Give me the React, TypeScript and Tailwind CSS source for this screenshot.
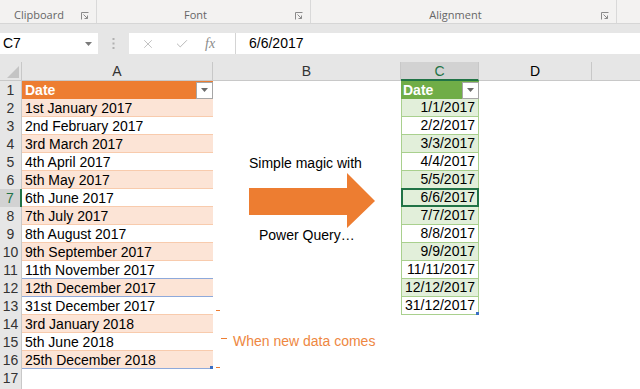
import React from "react";
import { X, Check } from "lucide-react";

const colA = [
  "Date",
  "1st January 2017",
  "2nd February 2017",
  "3rd March 2017",
  "4th April 2017",
  "5th May 2017",
  "6th June 2017",
  "7th July 2017",
  "8th August 2017",
  "9th September 2017",
  "11th November 2017",
  "12th December 2017",
  "31st December 2017",
  "3rd January 2018",
  "5th June 2018",
  "25th December 2018",
];

const colC = [
  "Date",
  "1/1/2017",
  "2/2/2017",
  "3/3/2017",
  "4/4/2017",
  "5/5/2017",
  "6/6/2017",
  "7/7/2017",
  "8/8/2017",
  "9/9/2017",
  "11/11/2017",
  "12/12/2017",
  "31/12/2017",
];

function Launcher() {
  return (
    <svg width="8" height="8" viewBox="0 0 8 8" className="absolute right-[7px] top-[12px]">
      <path d="M0.5 7.5V0.5H7.5" fill="none" stroke="#8a8a8a" strokeWidth="1" />
      <path d="M2.5 2.5L6.5 6.5M6.5 3.5V6.5H3.5" fill="none" stroke="#8a8a8a" strokeWidth="1" />
    </svg>
  );
}

function FilterBtn() {
  return (
    <div className="w-[17px] h-[17px] bg-white border border-[#a6a6a6] flex items-center justify-center">
      <svg width="7" height="4" viewBox="0 0 7 4">
        <path d="M0 0H7L3.5 4Z" fill="#6b6b6b" />
      </svg>
    </div>
  );
}

function Row({ n }: { n: number }) {
  const a = colA[n - 1];
  const c = colC[n - 1];
  const rowSel = n === 7;

  let aCls = "w-[191px] h-[18px] px-[3px] leading-[18px] whitespace-nowrap";
  if (n === 1) aCls += " bg-[#ed7d31] text-white font-bold flex items-center justify-between pr-0";
  else if (n <= 16) {
    aCls += n % 2 === 0 ? " bg-[#fce4d6]" : " bg-white";
    if (n === 11 || n === 12 || n === 16) aCls += " border-b border-[#8ea9db]";
    else aCls += " border-b border-[#f8cbad]";
  } else aCls += " bg-white";

  let cCls = "w-[78px] h-[18px] leading-[17px] whitespace-nowrap relative";
  if (n === 1) cCls += " bg-[#70ad47] text-white font-bold flex items-center justify-between pl-[2px]";
  else if (n <= 13) {
    cCls += " text-right pr-[3px] border-b border-x border-[#a9d08e]";
    cCls += n % 2 === 0 || n === 7 ? " bg-[#e2efda]" : " bg-white";
  }

  return (
    <div className="flex h-[18px] text-[14px] text-black">
      <div
        className={
          rowSel
            ? "w-[22px] h-[18px] bg-[#d2d2d2] text-[#217346] border-r-2 border-[#217346] text-center leading-[18px] text-[14px]"
            : "w-[22px] h-[18px] bg-[#e6e6e6] text-[#333] border-r border-[#c8c8c8] text-center leading-[18px] text-[14px]"
        }
      >
        {n <= 17 ? n : ""}
      </div>
      <div className={aCls + " relative"}>
        {n === 1 ? (
          <>
            <span>{a}</span>
            <FilterBtn />
          </>
        ) : (
          a
        )}
        {n === 16 && <div className="absolute right-0 bottom-[-1px] w-[3px] h-[3px] bg-[#3b6fc4]" />}
      </div>
      <div className="w-[188px] h-[18px] bg-white" />
      <div className={cCls}>
        {n === 1 ? (
          <>
            <span>{c}</span>
            <FilterBtn />
          </>
        ) : (
          c
        )}
        {n === 7 && (
          <div className="absolute left-[-1px] top-[-1px] right-[-1px] bottom-[-1px] border-2 border-[#217346]" />
        )}
        {n === 13 && <div className="absolute right-[-1px] bottom-[-1px] w-[3px] h-[3px] bg-[#3b6fc4]" />}
      </div>
      <div className="w-[113px] h-[18px] bg-white" />
      <div className="flex-1 h-[18px] bg-white" />
    </div>
  );
}

export default function App() {
  const rows = Array.from({ length: 18 }, (_, i) => i + 1);
  return (
    <div className="relative w-[640px] h-[389px] overflow-hidden bg-white font-['Liberation_Sans',Arial,sans-serif]">
      {/* Ribbon */}
      <div className="flex h-[24px] bg-[#f3f2f1] border-b border-[#d6d6d6] text-[11px] text-[#666] font-['Open_Sans',sans-serif]">
        <div className="relative w-[97px] h-[23px] border-r border-[#d9d9d9] pl-[14px] pt-[8px] leading-[14px]">
          Clipboard
          <Launcher />
        </div>
        <div className="relative w-[214px] h-[23px] border-r border-[#d9d9d9] pr-[16px] pt-[8px] leading-[14px] text-center">
          Font
          <Launcher />
        </div>
        <div className="relative w-[306px] h-[23px] border-r border-[#d9d9d9] pr-[16px] pt-[8px] leading-[14px] text-center">
          Alignment
          <Launcher />
        </div>
        <div className="flex-1" />
      </div>

      {/* Formula bar */}
      <div className="flex h-[38px] bg-[#e6e6e6] pt-[9px] pb-[8px]">
        <div className="w-[98px] h-[21px] bg-white flex items-center justify-between pl-[3px] pr-[6px] text-[14px] text-black">
          <span>C7</span>
          <svg width="7" height="4" viewBox="0 0 7 4">
            <path d="M0 0H7L3.5 4Z" fill="#7a7a7a" />
          </svg>
        </div>
        <div className="w-[31px] h-[21px] flex items-center justify-center">
          <svg width="3" height="11" viewBox="0 0 3 11">
            <rect x="0.5" y="0" width="2" height="2" fill="#b0b0b0" />
            <rect x="0.5" y="4.5" width="2" height="2" fill="#b0b0b0" />
            <rect x="0.5" y="9" width="2" height="2" fill="#b0b0b0" />
          </svg>
        </div>
        <div className="flex-1 h-[21px] bg-white flex items-center">
          <div className="w-[106px] flex items-center h-[21px]">
            <X size={14} strokeWidth={1.2} color="#a8a8a8" className="ml-[12px]" />
            <Check size={14} strokeWidth={1.4} color="#a8a8a8" className="ml-[20px]" />
            <span className="ml-[16px] text-[14px] italic text-[#8a8a8a] font-['Liberation_Serif',serif]">fx</span>
          </div>
          <div className="w-[1px] h-[21px] bg-[#d4d4d4]" />
          <span className="ml-[13px] text-[14px] text-black">6/6/2017</span>
        </div>
      </div>

      {/* Column headers */}
      <div className="flex h-[19px] text-[14px] text-[#333] leading-[18px]">
        <div className="relative w-[22px] h-[19px] bg-[#e6e6e6] border-r border-b border-[#c8c8c8]">
          <svg width="12" height="12" viewBox="0 0 12 12" className="absolute right-[2px] bottom-[2px]">
            <path d="M12 0V12H0Z" fill="#c4c4c4" />
          </svg>
        </div>
        <div className="w-[191px] h-[19px] bg-[#e6e6e6] border-r border-b border-[#c8c8c8] text-center">A</div>
        <div className="w-[188px] h-[19px] bg-[#e6e6e6] border-r border-b border-[#c8c8c8] text-center">B</div>
        <div className="w-[78px] h-[19px] bg-[#d2d2d2] border-r border-[#c8c8c8] border-b-2 border-b-[#217346] text-center text-[#217346]">C</div>
        <div className="w-[113px] h-[19px] bg-[#e6e6e6] border-r border-b border-[#c8c8c8] text-center text-black">D</div>
        <div className="flex-1 h-[19px] bg-[#e6e6e6] border-b border-[#c8c8c8]" />
      </div>

      {/* Grid */}
      <div className="flex flex-col">
        {rows.map((n) => (
          <Row key={n} n={n} />
        ))}
      </div>

      {/* Floating shapes */}
      <div className="absolute left-[249px] top-[155px] text-[14px] leading-[16px] text-black whitespace-nowrap">
        Simple magic with
      </div>
      <svg width="128" height="56" viewBox="0 0 128 56" className="absolute left-[249px] top-[173px]">
        <polygon points="0,15 98,15 98,0 126,28 98,55 98,42 0,42" fill="#ed7d31" />
      </svg>
      <div className="absolute left-[259px] top-[227px] text-[14px] leading-[16px] text-black whitespace-nowrap">
        Power Query…
      </div>

      <div className="absolute left-[216px] top-[310px] w-[4px] h-[1px] bg-[#ed7d31]" />
      <div className="absolute left-[216px] top-[367px] w-[4px] h-[1px] bg-[#ed7d31]" />
      <div className="absolute left-[221px] top-[338px] w-[6px] h-[1px] bg-[#ed7d31]" />
      <div className="absolute left-[233px] top-[333px] text-[14px] leading-[16px] text-[#ee8742] whitespace-nowrap">
        When new data comes
      </div>
    </div>
  );
}
